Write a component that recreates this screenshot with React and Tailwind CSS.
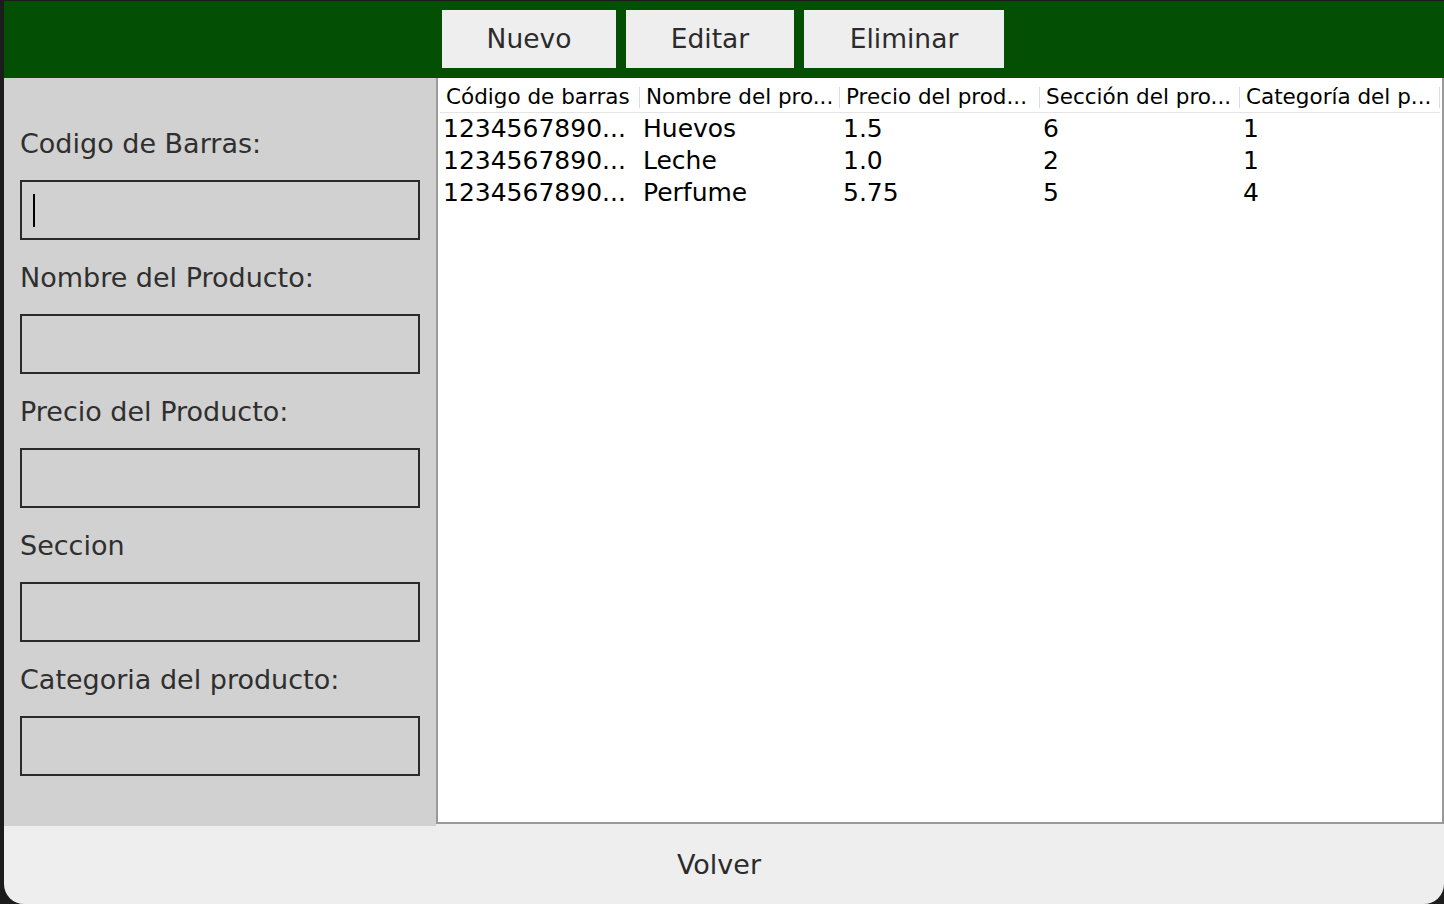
import React from 'react';

const FONT = { fontFamily: '"DejaVu Sans", "Liberation Sans", sans-serif' };

const campos = [
  'Codigo de Barras:',
  'Nombre del Producto:',
  'Precio del Producto:',
  'Seccion',
  'Categoria del producto:',
];

const columnas = [
  'Código de barras',
  'Nombre del pro...',
  'Precio del prod...',
  'Sección del pro...',
  'Categoría del p...',
];

const filas = [
  ['1234567890...', 'Huevos', '1.5', '6', '1'],
  ['1234567890...', 'Leche', '1.0', '2', '1'],
  ['1234567890...', 'Perfume', '5.75', '5', '4'],
];

function BotonTop({ children, w }) {
  return (
    <button className={`h-[58px] ${w} bg-[#eeeeee] text-[#2b2b2b] text-[26.5px]`}>
      {children}
    </button>
  );
}

export default function App() {
  return (
    <div className="w-[1444px] h-[904px] bg-[#1c1c1c] pl-[4px] pt-[1px] overflow-hidden" style={FONT}>
      <div className="w-[1440px] h-[903px] flex flex-col rounded-b-[20px] overflow-hidden bg-[#eeeeee]">
        {/* barra verde */}
        <div className="h-[77px] bg-[#034f03] flex items-start pt-[9px] pl-[438px] gap-[10px]">
          <BotonTop w="w-[174px]">Nuevo</BotonTop>
          <BotonTop w="w-[168px]">Editar</BotonTop>
          <BotonTop w="w-[200px]">Eliminar</BotonTop>
        </div>

        <div className="flex h-[748px]">
          {/* formulario */}
          <div className="w-[432px] bg-[#d1d1d1] pl-[16px] pt-[46px] flex flex-col">
            {campos.map((c, i) => (
              <div key={c} className="flex flex-col">
                <div className="h-[40px] text-[27px] text-[#2f2f2f] leading-[40px] whitespace-nowrap">{c}</div>
                <div className="mt-[16px] mb-[18px] w-[400px] h-[60px] border-2 border-[#2a2a2a] flex items-center pl-[11px]">
                  {i === 0 && <div className="w-[2px] h-[33px] bg-black" />}
                </div>
              </div>
            ))}
          </div>

          {/* tabla */}
          <div className="w-[1008px] bg-white border-l-2 border-b-2 border-r-2 border-[#9a9a9a] h-[746px] pt-[4px] pl-[2px]">
            <div className="flex h-[31px] border-b border-[#e4e4e4] mr-[2px]">
              {columnas.map((c) => (
                <div key={c} className="w-[200px] flex items-center">
                  <div className="flex-1 pl-[6px] text-[21.5px] text-black whitespace-nowrap overflow-hidden">{c}</div>
                  <div className="w-[1px] h-[21px] bg-[#dcdcdc]" />
                </div>
              ))}
            </div>
            {filas.map((f, i) => (
              <div key={i} className="flex h-[32px] items-center">
                {f.map((v, j) => (
                  <div key={j} className="w-[200px] pl-[3px] text-[25px] text-black whitespace-nowrap">{v}</div>
                ))}
              </div>
            ))}
          </div>
        </div>

        {/* volver */}
        <div className="flex-1 flex items-center justify-center pr-[10px] text-[27px] text-[#2b2b2b]">
          Volver
        </div>
      </div>
    </div>
  );
}
